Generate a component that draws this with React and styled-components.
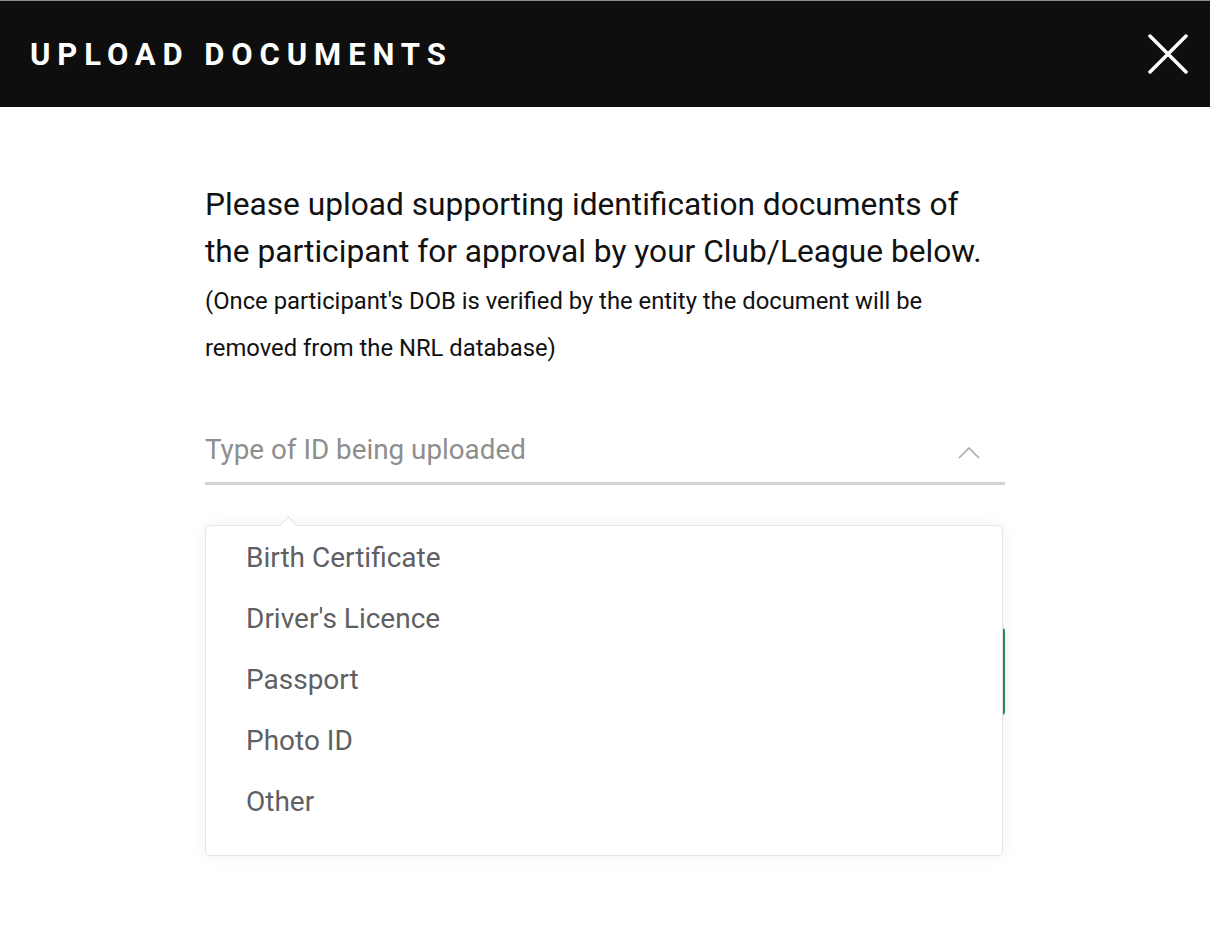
import React from 'react';
import styled, { createGlobalStyle } from 'styled-components';

const options = ['Birth Certificate', "Driver's Licence", 'Passport', 'Photo ID', 'Other'];

const GlobalStyle = createGlobalStyle`
  html, body {
    margin: 0;
    padding: 0;
    background: #fff;
    font-family: Roboto, "Liberation Sans", sans-serif;
  }
`;

const Page = styled.div`
  width: 1210px;
  min-height: 932px;
  background: #fff;
`;
const Header = styled.header`
  height: 106px;
  background: #0e0e0e;
  border-top: 1px solid #8a8a8a;
  display: flex;
  align-items: center;
  justify-content: space-between;
  padding: 0 22px 0 30px;
`;
const Title = styled.h1`
  margin: 0;
  color: #fff;
  font-size: 31px;
  font-weight: 700;
  letter-spacing: 6.9px;
`;
const Close = styled.button`
  background: none;
  border: 0;
  padding: 0;
  width: 40px;
  height: 40px;
  cursor: pointer;
  display: flex;
`;
const Body = styled.div`
  width: 800px;
  margin: 0 auto;
  padding-top: 74px;
  position: relative;
`;
const Lead = styled.p`
  margin: 0;
  color: #111;
  font-size: 31.7px;
  line-height: 47px;
`;
const Note = styled.p`
  margin: 3px 0 0;
  color: #111;
  font-size: 23.8px;
  line-height: 47px;
`;
const Select = styled.div`
  margin-top: 57px;
  height: 56px;
  border-bottom: 3px solid #d2d2d2;
  display: flex;
  align-items: center;
  justify-content: space-between;
  padding: 0 25px 12px 0;
  box-sizing: border-box;
`;
const Placeholder = styled.span`
  color: #8e8e8e;
  font-size: 27.8px;
`;
const Chevron = styled.svg`
  margin-top: 6px;
`;
const UploadButton = styled.div`
  margin-top: 143px;
  height: 83px;
  border: 2px solid #2e8b57;
  border-radius: 3px;
`;
const Menu = styled.ul`
  position: absolute;
  left: 0;
  top: 418px;
  width: 796px;
  margin: 0;
  padding: 1px 0 23px;
  list-style: none;
  background: #fff;
  border: 1px solid #e4e4ea;
  border-radius: 6px;
  box-shadow: 0 0 18px rgba(0, 0, 0, 0.06);

  &::before {
    content: '';
    position: absolute;
    left: 76px;
    top: -7px;
    width: 12px;
    height: 12px;
    background: #fff;
    border-left: 1px solid #e4e4ea;
    border-top: 1px solid #e4e4ea;
    transform: rotate(45deg);
  }
`;
const Item = styled.li`
  padding-left: 40px;
  height: 61px;
  line-height: 61px;
  font-size: 28px;
  color: #5f5f64;
`;

const App = () => (
  <Page>
    <GlobalStyle />
    <Header>
      <Title>UPLOAD DOCUMENTS</Title>
      <Close aria-label="Close">
        <svg width="40" height="40" viewBox="0 0 40 40">
          <path d="M2 2L38 38M38 2L2 38" stroke="#fff" strokeWidth="3.5" strokeLinecap="round" />
        </svg>
      </Close>
    </Header>
    <Body>
      <Lead>
        Please upload supporting identification documents of
        <br />
        the participant for approval by your Club/League below.
      </Lead>
      <Note>
        (Once participant's DOB is verified by the entity the document will be
        <br />
        removed from the NRL database)
      </Note>
      <Select>
        <Placeholder>Type of ID being uploaded</Placeholder>
        <Chevron width="22" height="12" viewBox="0 0 22 12">
          <path d="M1 11L11 1L21 11" fill="none" stroke="#a9a9b0" strokeWidth="1.6" />
        </Chevron>
      </Select>
      <UploadButton />
      <Menu>
        {options.map((o) => (
          <Item key={o}>{o}</Item>
        ))}
      </Menu>
    </Body>
  </Page>
);

export default App;
